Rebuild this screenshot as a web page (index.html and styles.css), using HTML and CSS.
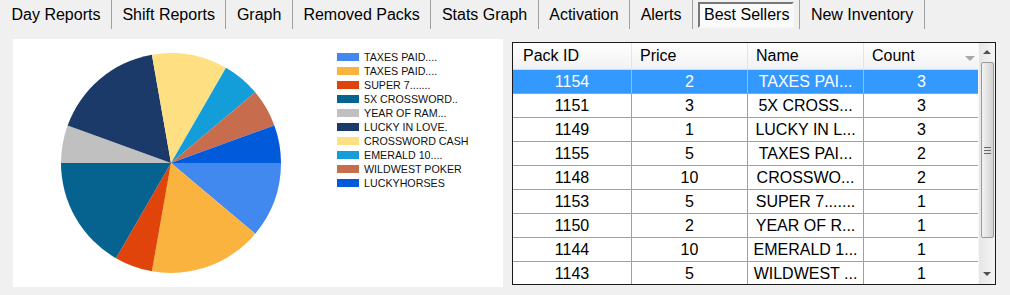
FILE: index.html
```html
<!DOCTYPE html>
<html lang="en">
<head>
    <meta charset="UTF-8">
    <title>Best Sellers</title>
    <link rel="stylesheet" href="styles.css">
</head>
<body>

<div class="tabs">
    <div class="tab">Day Reports</div>
    <div class="tab">Shift Reports</div>
    <div class="tab">Graph</div>
    <div class="tab">Removed Packs</div>
    <div class="tab">Stats Graph</div>
    <div class="tab">Activation</div>
    <div class="tab">Alerts</div>
    <div class="tab active"><span>Best Sellers</span></div>
    <div class="tab">New Inventory</div>
</div>

<div class="content">
    <div class="chart-panel">
        <svg class="pie" width="324" height="248" viewBox="0 0 324 248">
            <path d="M158 124 L268 124 A110 110 0 0 1 242.26 194.71 Z" fill="#4189ee"/>
            <path d="M158 124 L242.26 194.71 A110 110 0 0 1 138.9 232.33 Z" fill="#fbb33f"/>
            <path d="M158 124 L138.9 232.33 A110 110 0 0 1 103 219.26 Z" fill="#e0440a"/>
            <path d="M158 124 L103 219.26 A110 110 0 0 1 48 124 Z" fill="#06628f"/>
            <path d="M158 124 L48 124 A110 110 0 0 1 54.63 86.38 Z" fill="#c0c0c0"/>
            <path d="M158 124 L54.63 86.38 A110 110 0 0 1 138.9 15.67 Z" fill="#1b3a69"/>
            <path d="M158 124 L138.9 15.67 A110 110 0 0 1 213 28.74 Z" fill="#fee082"/>
            <path d="M158 124 L213 28.74 A110 110 0 0 1 242.26 53.29 Z" fill="#149ed9"/>
            <path d="M158 124 L242.26 53.29 A110 110 0 0 1 261.37 86.38 Z" fill="#c86c4e"/>
            <path d="M158 124 L261.37 86.38 A110 110 0 0 1 268 124 Z" fill="#005ad9"/>
        </svg>
        <ul class="legend">
            <li><i class="sw" style="background:#4189ee"></i>TAXES PAID....</li>
            <li><i class="sw" style="background:#fbb33f"></i>TAXES PAID....</li>
            <li><i class="sw" style="background:#e0440a"></i>SUPER 7.......</li>
            <li><i class="sw" style="background:#06628f"></i>5X CROSSWORD..</li>
            <li><i class="sw" style="background:#c0c0c0"></i>YEAR OF RAM...</li>
            <li><i class="sw" style="background:#1b3a69"></i>LUCKY IN LOVE.</li>
            <li><i class="sw" style="background:#fee082"></i>CROSSWORD CASH</li>
            <li><i class="sw" style="background:#149ed9"></i>EMERALD 10....</li>
            <li><i class="sw" style="background:#c86c4e"></i>WILDWEST POKER</li>
            <li><i class="sw" style="background:#005ad9"></i>LUCKYHORSES</li>
        </ul>
    </div>

    <div class="grid">
        <div class="grid-body">
            <table>
                <thead>
                    <tr>
                        <th class="c-id">Pack ID</th>
                        <th class="c-price">Price</th>
                        <th class="c-name">Name</th>
                        <th class="c-count">Count<span class="sort"></span></th>
                    </tr>
                </thead>
                <tbody>
                    <tr class="selected"><td>1154</td><td>2</td><td>TAXES PAI...</td><td>3</td></tr>
                    <tr><td>1151</td><td>3</td><td>5X CROSS...</td><td>3</td></tr>
                    <tr><td>1149</td><td>1</td><td>LUCKY IN L...</td><td>3</td></tr>
                    <tr><td>1155</td><td>5</td><td>TAXES PAI...</td><td>2</td></tr>
                    <tr><td>1148</td><td>10</td><td>CROSSWO...</td><td>2</td></tr>
                    <tr><td>1153</td><td>5</td><td>SUPER 7.......</td><td>1</td></tr>
                    <tr><td>1150</td><td>2</td><td>YEAR OF R...</td><td>1</td></tr>
                    <tr><td>1144</td><td>10</td><td>EMERALD 1...</td><td>1</td></tr>
                    <tr><td>1143</td><td>5</td><td>WILDWEST ...</td><td>1</td></tr>
                </tbody>
            </table>
        </div>
        <div class="scrollbar">
            <div class="arrow up"></div>
            <div class="thumb"><span class="grip"></span></div>
            <div class="arrow down"></div>
        </div>
    </div>
</div>

</body>
</html>
```

FILE: styles.css
```css
body {
    font-family: "Liberation Sans", Arial, sans-serif;
    margin: 0;
    padding: 0;
    background-color: #f0f0f0;
    color: #000;
    width: 1010px;
    height: 295px;
    overflow: hidden;
}
.tabs {
    display: flex;
    height: 29px;
    padding-left: 1px;
    font-size: 16px;
}
.tab {
    padding: 0 10.5px;
    line-height: 29px;
    border-right: 1px solid #a0a0a0;
    white-space: nowrap;
}
.tab.active {
    padding: 2px 5px 1px 5px;
    line-height: 22px;
}
.tab.active span {
    display: block;
    padding: 0 3px 0 4px;
    border: 2px solid;
    border-color: #777 #f8f8f8 #f8f8f8 #777;
    background-color: #fafafa;
}
.content {
    display: flex;
    align-items: flex-start;
    padding: 10px 0 0 13px;
}
.chart-panel {
    display: flex;
    width: 490px;
    height: 248px;
    background-color: white;
}
.pie {
    display: block;
    flex: none;
}
.legend {
    list-style: none;
    margin: 0;
    padding: 11px 0 0 0;
    font-size: 10.7px;
    color: #111;
}
.legend li {
    display: flex;
    align-items: center;
    height: 14px;
    white-space: nowrap;
}
.sw {
    display: inline-block;
    width: 22px;
    height: 8px;
    margin-right: 5px;
}
.grid {
    display: flex;
    margin: 3px 0 0 9px;
    width: 482px;
    height: 241px;
    border: 1px solid #1a1a1a;
    background-color: white;
}
.grid-body {
    width: 465px;
    height: 241px;
    overflow: hidden;
}
table {
    border-collapse: collapse;
    table-layout: fixed;
    width: 465px;
    font-size: 16px;
}
th {
    height: 26px;
    padding: 0 0 0 8px;
    font-weight: normal;
    text-align: left;
    background: linear-gradient(#ffffff, #f1f2f4);
    border-right: 1px solid #e3e4e6;
    border-bottom: 1px solid #d8d8d8;
}
th.c-id { width: 108px; padding-left: 10px; }
th.c-price { width: 107px; }
th.c-name { width: 107px; }
th.c-count { width: 107px; }
.sort {
    float: right;
    width: 0;
    height: 0;
    margin: 9px 4px 0 0;
    border-left: 5px solid transparent;
    border-right: 5px solid transparent;
    border-top: 5px solid #a8a8a8;
}
td {
    height: 23px;
    padding: 0 2px;
    text-align: center;
    white-space: nowrap;
    overflow: hidden;
    border-right: 1px solid #a0a0a0;
    border-bottom: 1px solid #a0a0a0;
}
tr.selected td {
    background-color: #3399ff;
    color: white;
    border-right-color: #8cc0f0;
}
.scrollbar {
    display: flex;
    flex-direction: column;
    align-items: center;
    width: 17px;
    background: linear-gradient(90deg, #e6e6e6, #f4f4f4);
    border-left: 1px solid #f8f8f8;
    box-sizing: border-box;
}
.arrow {
    width: 0;
    height: 0;
    border-left: 4px solid transparent;
    border-right: 4px solid transparent;
}
.arrow.up {
    margin: 7px 0 8px 0;
    border-bottom: 4px solid #505050;
}
.arrow.down {
    margin-top: auto;
    margin-bottom: 8px;
    border-top: 4px solid #505050;
}
.thumb {
    display: flex;
    align-items: center;
    justify-content: center;
    width: 13px;
    height: 176px;
    box-sizing: border-box;
    border: 1px solid #9a9a9a;
    border-radius: 2px;
    background: linear-gradient(90deg, #f2f2f2, #e2e2e2 50%, #d2d2d2);
}
.grip {
    display: block;
    width: 7px;
    height: 5px;
    border-top: 1px solid #6a6a6a;
    border-bottom: 1px solid #6a6a6a;
    background: linear-gradient(transparent 2px, #6a6a6a 2px, #6a6a6a 3px, transparent 3px);
}
```
